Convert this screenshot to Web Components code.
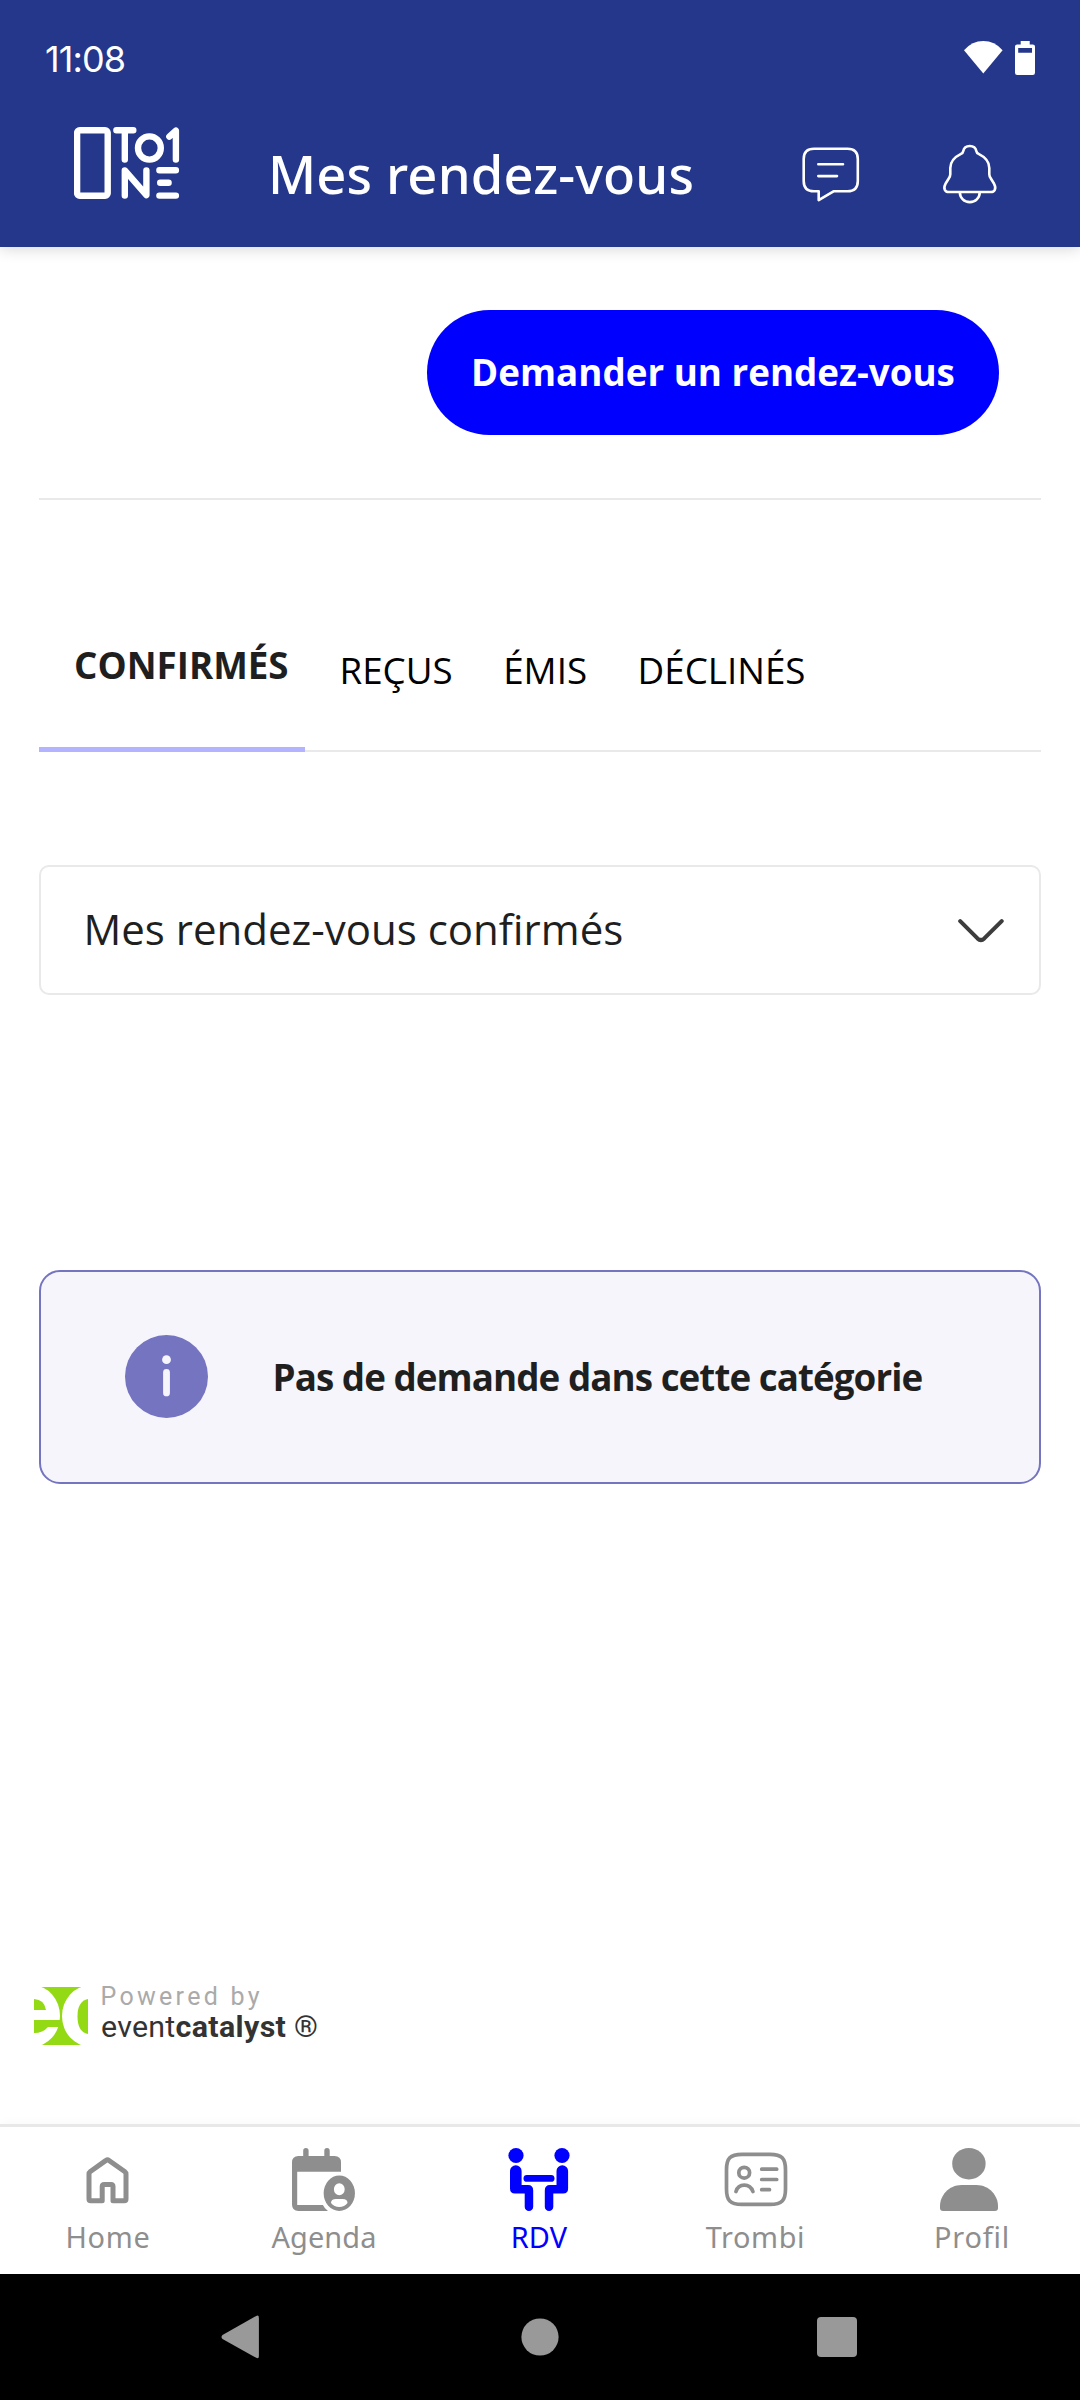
<!DOCTYPE html>
<html lang="fr">
<head>
<meta charset="utf-8">
<title>Mes rendez-vous</title>
<style>
body{margin:0;background:#fff;font-family:"Open Sans","Noto Sans",sans-serif;color:#1f1f1f}
</style>
</head>
<body>
<rdv-app></rdv-app>
<script>
const define = (name, html) => customElements.define(name, class extends HTMLElement {
  constructor() {
    super();
    const t = document.createElement('template');
    t.innerHTML = html;
    this.attachShadow({mode: 'open'}).appendChild(t.content.cloneNode(true));
  }
});

define('status-bar', `
<style>
:host{display:flex;align-items:center;justify-content:space-between;height:118px;padding:0 44px 0 45px;box-sizing:border-box;color:#fff}
time{font:400 36px/48px Inter,sans-serif;letter-spacing:-.9px}
svg{display:block;margin-top:-2px}
</style>
<time>11:08</time>
<svg width="72" height="34" viewBox="964 41 72 34" fill="#fff">
  <path d="M983.3 73.6 964 50.2Q972 41 983.3 41T1002.6 50.2Z"/>
  <path fill-rule="evenodd" d="M1020.7 41h9v3.4h3.1q2.2 0 2.2 2.2v26.2q0 2.2-2.2 2.2h-15.6q-2.2 0-2.2-2.2V46.6q0-2.2 2.2-2.2h3.5zM1018.2 48v4.7h13.8V48z"/>
</svg>`);

define('brand-logo', `
<style>:host{display:block}svg{display:block}</style>
<svg width="106" height="72" viewBox="74 127 106 72" fill="none" stroke="#fff" stroke-width="6.4" stroke-linecap="round" stroke-linejoin="round">
  <rect x="77.1" y="130.2" width="30.6" height="65.6" rx="2.6"/>
  <path d="M116.4 130.3H133.3M124.8 131V159.6M169.3 136.6 175.9 130.6V159.6M124.8 195.6V170.4L146.4 195.2V170.4M159.4 170.2H175.9M160.2 182.8H168.6M159.4 195.6H175.9"/>
  <ellipse cx="149.4" cy="148" rx="11.4" ry="11.6"/>
</svg>`);

define('app-bar', `
<style>
:host{display:flex;align-items:flex-start;height:129px;padding:0 81px 0 74px;box-sizing:border-box;color:#fff}
brand-logo{margin-top:9px}
h1{margin:21px 0 0 88px;font:500 52.5px/70px "Noto Sans","Open Sans",sans-serif;letter-spacing:.14px;white-space:nowrap}
nav{display:flex;gap:80px;margin:26px 0 0 auto}
svg{display:block;fill:none;stroke:#fff;stroke-width:2.6;stroke-linecap:round;stroke-linejoin:round}
</style>
<brand-logo></brand-logo>
<h1><slot></slot></h1>
<nav>
<svg width="60" height="60" viewBox="801 144 60 60"><path d="M814 148.8H847.5Q857.8 148.8 857.8 159V181Q857.8 191.3 847.5 191.3H833.5L818.7 200.2V191.3H814Q803.7 191.3 803.7 181V159Q803.7 148.8 814 148.8ZM818.3 164.2H843M818.3 176.1H837"/></svg>
<svg width="58" height="60" viewBox="941 144 58 60"><path d="M969.8 146C966.2 146 963.8 148.4 963.2 151.2Q962.9 153 961 153.9C954.3 157.2 950.3 161.5 950.3 168V174.3Q950.3 176.4 948.6 178.8L945.5 183.8Q943.6 187.2 944.8 189.8 946 192 948.8 192H990.8Q993.6 192 994.8 189.8 996 187.2 994.1 183.8L991 178.8Q989.3 176.4 989.3 174.3V168C989.3 161.5 985.3 157.2 978.6 153.9Q976.7 153 976.4 151.2C975.8 148.4 973.4 146 969.8 146ZM959.8 192.2C960 198 964.2 202.1 969.8 202.1S979.6 198 979.8 192.2"/></svg>
</nav>`);

define('top-header', `
<style>:host{display:block;position:relative;background:#24378b;box-shadow:0 2px 14px rgba(0,0,0,.16)}</style>
<status-bar></status-bar><slot></slot>`);

define('pill-button', `
<style>
:host{display:block}
button{display:block;width:572px;height:125px;padding:0 0 2px;border:0;border-radius:62.5px;background:#00f;color:#fff;font:700 36.75px/50px "Open Sans",sans-serif;white-space:nowrap}
</style>
<button><slot></slot></button>`);

define('tab-bar', `
<style>
:host{display:flex;align-items:flex-start;gap:50.5px;height:132px;box-shadow:inset 0 -2px #e9e9e9}
</style><slot></slot>`);

define('tab-item', `
<style>
:host{display:block;box-sizing:border-box;height:132px;padding-top:25px;font:400 36.75px/50px "Open Sans",sans-serif;color:#000;white-space:nowrap}
:host([active]){width:266px;margin-right:-16px;padding:20px 0 0 35px;border-bottom:5px solid #b3b3ff;font-weight:700;color:#1f1f1f}
</style><slot></slot>`);

define('select-box', `
<style>
:host{display:flex;align-items:center;justify-content:space-between;box-sizing:border-box;height:130px;border:2px solid #e9e9e9;border-radius:10px;padding:0 35px 0 42.5px;font-size:42px;line-height:58px}
span{margin-top:-2px}
svg{display:block}
</style>
<span><slot></slot></span>
<svg width="46" height="25" viewBox="957.5 918 46 25" fill="none" stroke="#3d3d3d" stroke-width="4.1" stroke-linecap="round" stroke-linejoin="round"><path d="M959.7 921.1 977 938.4Q980.4 941.6 983.8 938.4L1001.2 921.1"/></svg>`);

define('info-alert', `
<style>
:host{display:flex;align-items:center;box-sizing:border-box;height:214px;border:2px solid #7474c1;border-radius:21px;background:#f6f5fb;padding-left:84px;gap:64.5px;font-weight:700;font-size:36.75px;line-height:50px;letter-spacing:-.94px;white-space:nowrap}
svg{display:block;flex:none}
</style>
<svg width="83" height="84" viewBox="0 0 83 84"><ellipse cx="41.5" cy="41.5" rx="41.5" ry="41.5" fill="#7474c1"/><circle cx="41.5" cy="24.7" r="4.4" fill="#f6f5fb"/><rect x="38.1" y="34" width="6.8" height="27.3" rx="3.4" fill="#f6f5fb"/></svg>
<span><slot></slot></span>`);

define('powered-by', `
<style>
:host{display:flex;align-items:flex-start;gap:13px;font-family:Roboto,sans-serif;color:#333;white-space:nowrap}
svg{display:block}
p{margin:0}
.by{font-size:25px;line-height:28px;letter-spacing:3.3px;color:#aaa;margin:-4.5px 0 0 -.5px}
.name{font-size:30.4px;line-height:31px;letter-spacing:.25px}
b{font-weight:700;letter-spacing:.35px}
</style>
<svg width="54" height="58" viewBox="0 0 54 58">
  <path fill="#93d914" d="M0 0H54V58H0Z"/>
  <ellipse cx="-1" cy="29" rx="27" ry="30.5" fill="#fff"/>
  <path fill="#93d914" d="M0 12Q10.5 12.5 12 23H0ZM0 33H27V40H14Q9 46 0 46Z"/>
  <ellipse cx="56" cy="29" rx="28" ry="30.5" fill="#fff"/>
  <path fill="#93d914" d="M54 12Q43.5 14 43.5 29.5T54 47Z"/>
</svg>
<div><p class="by">Powered by</p><p class="name">event<b>catalyst</b> ®</p></div>`);

define('nav-item', `
<style>
:host{display:flex;flex-direction:column;align-items:center;flex:0 0 216px;box-sizing:border-box;color:#8e8e8e;font:400 28.9px/40px "Noto Sans","Open Sans",sans-serif;white-space:nowrap}
:host([active]){color:#00f}
::slotted(svg){display:block}
span{margin-top:5px}
</style>
<slot name="icon"></slot><span><slot></slot></span>`);

define('bottom-nav', `
<style>
:host{display:flex;box-sizing:border-box;height:150px;border-top:3px solid #e8e8e8;background:#fff;padding-top:18px;box-shadow:0 -1px 10px rgba(0,0,0,.03)}
</style><slot></slot>`);

define('system-nav', `
<style>
:host{display:flex;align-items:center;justify-content:space-between;box-sizing:border-box;height:126px;padding:0 223px 0 221px;background:#000}
svg{display:block;fill:#999}
</style>
<svg width="40" height="44" viewBox="221 2315 40 44"><path d="M256.2 2316Q258.9 2314.6 258.9 2318V2356Q258.9 2359.3 256.2 2357.8L222.5 2339Q220.5 2337 222.5 2335Z"/></svg>
<svg width="40" height="38" viewBox="0 0 40 38"><circle cx="21" cy="19" r="18.6"/></svg>
<svg width="40" height="40" viewBox="0 0 40 40"><rect width="40" height="40" rx="4"/></svg>`);

define('rdv-app', `
<style>
:host{display:flex;flex-direction:column;width:1080px;height:2400px;overflow:hidden;background:#fff}
main{flex:1;display:flex;flex-direction:column;padding:63px 39px 0}
pill-button{align-self:flex-end;margin-right:42px}
hr{align-self:stretch;margin:63px 0 120px;border:0;height:2px;background:#e9e9e9}
select-box{margin-top:113px}
info-alert{margin-top:275px}
powered-by{margin:auto 0 79px -5px}
</style>
<top-header><app-bar>Mes rendez-vous</app-bar></top-header>
<main>
  <pill-button>Demander un rendez-vous</pill-button>
  <hr>
  <tab-bar><tab-item active>CONFIRMÉS</tab-item><tab-item>REÇUS</tab-item><tab-item>ÉMIS</tab-item><tab-item>DÉCLINÉS</tab-item></tab-bar>
  <select-box>Mes rendez-vous confirmés</select-box>
  <info-alert>Pas de demande dans cette catégorie</info-alert>
  <powered-by></powered-by>
</main>
<bottom-nav>
  <nav-item style="letter-spacing:.75px">
    <svg slot="icon" width="66" height="67" viewBox="75 2145 66 67" fill="none" stroke="#8e8e8e" stroke-width="5" stroke-linejoin="round"><path d="M106 2160.4Q107.500 2159.3 109 2160.4L124.6 2171.5Q126 2172.6 126 2174V2199Q126 2200.8 124.2 2200.8H113V2186.6Q113 2184.6 111 2184.6H104.2Q102.2 2184.6 102.2 2186.6V2200.8H90.8Q89 2200.8 89 2199V2174Q89 2172.6 90.4 2171.5Z"/></svg>Home</nav-item>
  <nav-item style="letter-spacing:.1px">
    <svg slot="icon" width="66" height="67" viewBox="291 2145 66 67" fill="#8e8e8e"><path fill-rule="evenodd" d="M298.5 2156H303.2V2150.8Q303.2 2148 305.9 2148T308.6 2150.8V2156H324.3V2150.8Q324.3 2148 327 2148T329.7 2150.8V2156H334.5Q341 2156 341 2162.5V2171.7H297.2V2205H322.9Q324.5 2208.5 328 2211H298.5Q292 2211 292 2204.5V2162.5Q292 2156 298.5 2156Z"/><path fill-rule="evenodd" d="M339.3 2175.5A15.7 17.7 0 0 1 339.3 2210.9A15.7 17.7 0 0 1 339.3 2175.5ZM339.3 2183.3A5.4 6 0 0 0 339.3 2195.3A5.4 6 0 0 0 339.3 2183.3ZM331 2203Q331 2199 336 2199H342.6Q347.5 2199 347.5 2203 344.5 2207 339.3 2207T331 2203Z"/></svg>Agenda</nav-item>
  <nav-item active style="letter-spacing:.2px;padding-right:2px">
    <svg slot="icon" width="66" height="67" viewBox="506.5 2145 66 67" fill="#00f"><circle cx="516.5" cy="2155.5" r="7.6"/><circle cx="562.5" cy="2155.5" r="7.6"/><path d="M510.5 2171A5.8 5.8 0 0 1 522.1 2171V2185H528.5Q533.7 2185 533.7 2190.5V2206.7A4.25 4.25 0 0 1 525.2 2206.7V2193.6H515.5Q510.5 2193.6 510.5 2188.6ZM568.6 2171A5.8 5.8 0 0 0 557 2171V2185H550.5Q545.3 2185 545.3 2190.5V2206.7A4.25 4.25 0 0 0 553.8 2206.7V2193.6H563.6Q568.6 2193.6 568.6 2188.6Z"/><rect x="524" y="2175" width="31" height="6.8" rx="3.4"/></svg>RDV</nav-item>
  <nav-item style="letter-spacing:.6px;padding-right:1px">
    <svg slot="icon" width="66" height="67" viewBox="722.5 2145 66 67" fill="none" stroke="#8e8e8e" stroke-width="3.7" stroke-linecap="round"><path d="M741.5 2154.3H769.5C781.5 2154.3 785 2158.5 785 2170V2189C785 2200.5 781.5 2204.4 769.5 2204.4H741.5C729.5 2204.4 726 2200.5 726 2189V2170C726 2158.5 729.5 2154.3 741.5 2154.3ZM761.2 2169.2H776.2M761.2 2179.5H776.2M761.2 2189.7H769M735.5 2191.5C738 2183 749.5 2183 752.4 2191.5"/><circle cx="743.7" cy="2172.7" r="5.4"/></svg>Trombi</nav-item>
  <nav-item style="letter-spacing:.8px">
    <svg slot="icon" width="66" height="67" viewBox="939 2145 66 67" fill="#8e8e8e"><ellipse cx="968.9" cy="2163.7" rx="16.7" ry="15.8"/><path d="M961.5 2185H976.5C989.5 2185 998 2196 998 2206V2208Q998 2211 995 2211H943Q940 2211 940 2208V2206C940 2196 948.5 2185 961.5 2185Z"/></svg>Profil</nav-item>
</bottom-nav>
<system-nav></system-nav>`);
</script>
</body>
</html>
